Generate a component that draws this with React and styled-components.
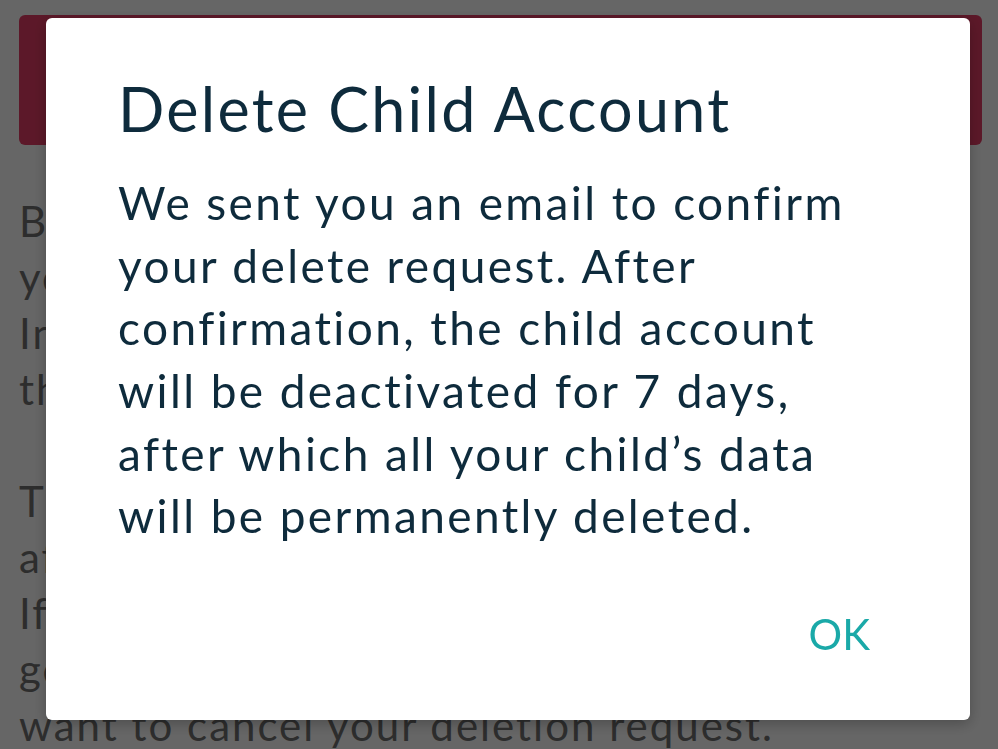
import React from 'react';
import styled, { createGlobalStyle } from 'styled-components';

const GlobalStyle = createGlobalStyle`
  html, body {
    margin: 0;
    padding: 0;
    background: #ffffff;
  }
  body {
    font-family: Lato, "Liberation Sans", sans-serif;
  }
`;

const noticeLines = [
  ['By deleting your child’s account, you will lose', 'your child’s activity history and all settings.', 'In addition, your child will no longer be able to', 'their account or use the Fitbit app.'],
  ['This request can be cancelled within 7 days', 'after you confirm it by email.', 'If you change your mind during this time,', 'go to the account settings page if you', 'want to cancel your deletion request.'],
];

const messageLines = [
  'We sent you an email to confirm',
  'your delete request. After',
  'confirmation, the child account',
  'will be deactivated for 7 days,',
  'after which all your child’s data',
  'will be permanently deleted.',
];

export default function App() {
  return (
    <>
      <GlobalStyle />
      <Page>
        <Banner />
        <Notice>
          {noticeLines.map((para, i) => (
            <Paragraph key={i}>
              {para.map(line => (
                <Line key={line}>{line}</Line>
              ))}
            </Paragraph>
          ))}
        </Notice>
      </Page>
      <Overlay />
      <Dialog role='dialog'>
        <Title>Delete Child Account</Title>
        <Message>
          {messageLines.map(line => (
            <Line key={line}>{line}</Line>
          ))}
        </Message>
        <Actions>
          <OkButton>OK</OkButton>
        </Actions>
      </Dialog>
    </>
  );
}

const Page = styled.div`
  box-sizing: border-box;
  height: 749px;
  overflow: hidden;
  padding: 15px 16px 0 19px;
  background: #ffffff;
`;

const Banner = styled.div`
  height: 130px;
  border-radius: 6px;
  background: #e63e66;
`;

const Notice = styled.div`
  margin-top: 48px;
  color: #727272;
  font-size: 42px;
  line-height: 56px;
  letter-spacing: 2px;
`;

const Paragraph = styled.div`
  & + & {
    margin-top: 56px;
  }
`;

const Line = styled.div`
  white-space: nowrap;
`;

const Overlay = styled.div`
  position: fixed;
  inset: 0;
  background: rgba(0, 0, 0, 0.6);
`;

const Dialog = styled.div`
  position: fixed;
  left: 46px;
  top: 18px;
  width: 924px;
  height: 702px;
  box-sizing: border-box;
  padding: 54px 72px 0;
  display: flex;
  flex-direction: column;
  background: #ffffff;
  border-radius: 6px;
  box-shadow: 0 4px 14px rgba(0, 0, 0, 0.25);
  color: #0e2b3c;
`;

const Title = styled.h2`
  margin: 0;
  font-size: 61px;
  font-weight: 400;
  line-height: 1.2;
  letter-spacing: 2.3px;
  white-space: nowrap;
`;

const Message = styled.div`
  margin-top: 27px;
  font-size: 46px;
  line-height: 62.6px;
  letter-spacing: 2.4px;
`;

const Actions = styled.div`
  display: flex;
  justify-content: flex-end;
  margin-top: 61px;
  padding-right: 28px;
`;

const OkButton = styled.button`
  border: none;
  background: none;
  padding: 0;
  font-family: inherit;
  font-size: 42px;
  line-height: 1.2;
  color: #1aa9a8;
  cursor: pointer;
`;
